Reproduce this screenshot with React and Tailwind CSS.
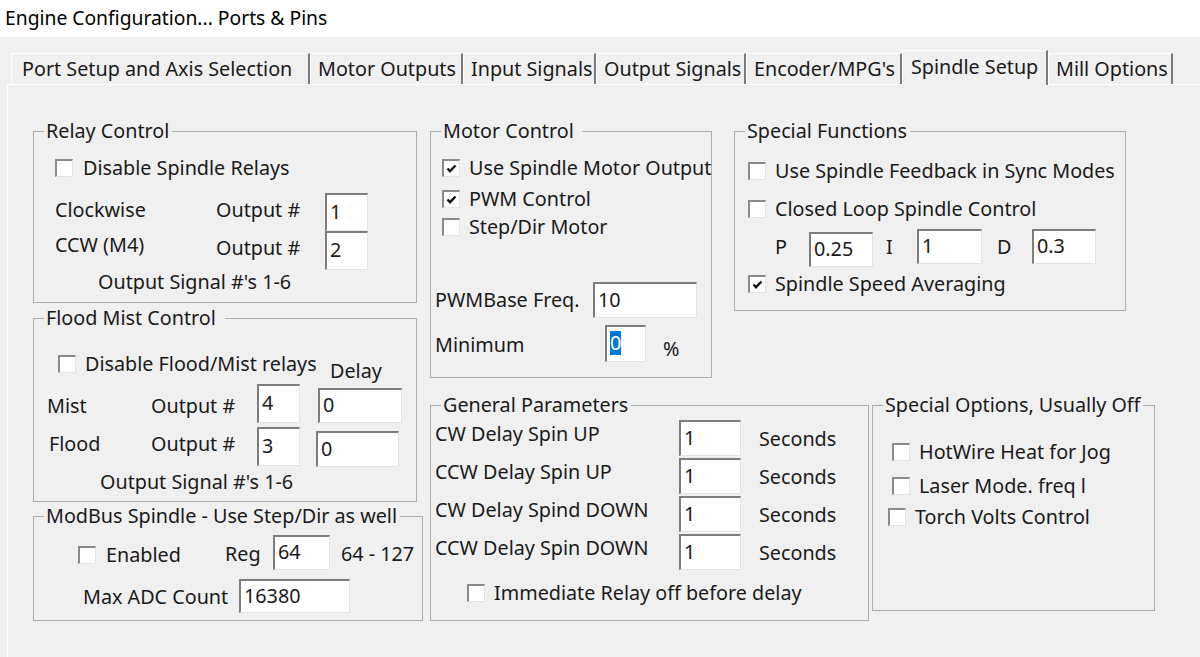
import React from 'react';

function Check({ checked }) {
  return (
    <span className="w-[18px] h-[18px] shrink-0 bg-white border-t-2 border-l-2 border-t-[#8a8a8a] border-l-[#8a8a8a] border-r border-b border-r-[#e3e3e3] border-b-[#e3e3e3] flex items-center justify-center">
      {checked && (
        <svg width="11" height="10" viewBox="0 0 11 10">
          <path d="M1.5 4.5 L4 7.2 L9.5 1.5" fill="none" stroke="#111" strokeWidth="2.4" />
        </svg>
      )}
    </span>
  );
}

function CheckRow({ label, checked, className }) {
  return (
    <div className={`flex items-center h-[24px] gap-[9px] whitespace-nowrap ${className}`}>
      <Check checked={checked} />
      <span>{label}</span>
    </div>
  );
}

function Field({ value, className, selected }) {
  return (
    <div className={`shrink-0 bg-white border-t-2 border-l-2 border-t-[#7d7d7d] border-l-[#7d7d7d] border-r border-b border-r-[#e3e3e3] border-b-[#e3e3e3] flex items-center pl-[3px] pb-[2px] ${className}`}>
      {selected ? <span className="bg-[#0078d7] text-white">{value}</span> : value}
    </div>
  );
}

function Group({ title, titleClass = 'pr-[3px]', className, children }) {
  return (
    <div className={`shrink-0 border border-[#adadad] ${className}`}>
      <div className={`-mt-[13px] ml-[10px] w-fit h-[24px] bg-[#f0f0f0] pl-[2px] whitespace-nowrap ${titleClass}`}>{title}</div>
      {children}
    </div>
  );
}

function Tab({ label, className, active }) {
  if (active) {
    return (
      <div className={`relative z-10 h-[35px] -mb-px bg-[#f0f0f0] border-t border-l border-white border-r-2 border-r-[#7a7a7a] pl-[8px] pt-[4px] whitespace-nowrap ${className}`}>
        {label}
      </div>
    );
  }
  return (
    <div className={`h-[31px] bg-[#f0f0f0] border-t border-l border-white border-r-2 border-r-[#7a7a7a] pl-[7px] pt-[3px] whitespace-nowrap ${className}`}>
      {label}
    </div>
  );
}

const delays = ['CW Delay Spin UP', 'CCW Delay Spin UP', 'CW Delay Spind DOWN', 'CCW Delay Spin DOWN'];

export default function App() {
  return (
    <div className="w-[1200px] h-[657px] overflow-hidden bg-[#f0f0f0] text-[#1a1a1a] font-['Noto_Sans',sans-serif] text-[19.75px] leading-[24px]">
      {/* Window title */}
      <div className="h-[37px] bg-white pl-[5px] pt-[6px] text-[19.3px] text-black">Engine Configuration... Ports &amp; Pins</div>

      {/* Tabs */}
      <div className="h-[47px] flex items-end pl-[11px]">
        <Tab label="Port Setup and Axis Selection" className="w-[299px] pl-[10px]" />
        <Tab label="Motor Outputs" className="w-[153px]" />
        <Tab label="Input Signals" className="w-[133px]" />
        <Tab label="Output Signals" className="w-[150px]" />
        <Tab label="Encoder/MPG's" className="w-[156px]" />
        <Tab label="Spindle Setup" className="w-[146px]" active />
        <Tab label="Mill Options" className="w-[125px] pl-[5px]" />
      </div>

      {/* Panel */}
      <div className="ml-[7px] h-[600px] border-t border-l border-white pt-[46px] pl-[25px] flex items-start gap-[7px]">
        {/* Left column */}
        <div className="w-[390px] flex flex-col">
          <Group title="Relay Control" className="w-[384px] h-[172px]">
            <CheckRow label="Disable Spindle Relays" className="mt-[13px] ml-[21px] gap-[10px]" />
            <div className="mt-[13px] pl-[21px] flex items-start h-[38px]">
              <span className="w-[161px] mt-[5px]">Clockwise</span>
              <span className="w-[109px] mt-[5px]">Output #</span>
              <Field value="1" className="w-[43px] h-[38px]" />
            </div>
            <div className="pl-[21px] flex items-start h-[39px]">
              <span className="w-[161px] mt-[2px]">CCW (M4)</span>
              <span className="w-[109px] mt-[5px]">Output #</span>
              <Field value="2" className="w-[43px] h-[39px]" />
            </div>
            <div className="pl-[64px] h-[24px]">Output Signal #'s 1-6</div>
          </Group>

          <Group title="Flood Mist Control" titleClass="pr-[9px]" className="w-[384px] h-[184px] mt-[15px]">
            <div className="mt-[22px] pl-[24px] flex items-start h-[24px]">
              <CheckRow label="Disable Flood/Mist relays" className="w-[272px]" />
              <span className="mt-[7px]">Delay</span>
            </div>
            <div className="mt-[8px] pl-[13px] flex items-start h-[39px]">
              <span className="w-[104px] mt-[10px]">Mist</span>
              <span className="w-[106px] mt-[10px]">Output #</span>
              <Field value="4" className="w-[43px] h-[39px]" />
              <Field value="0" className="ml-[18px] mt-[4px] w-[84px] h-[35px]" />
            </div>
            <div className="mt-[4px] pl-[15px] flex items-start h-[39px]">
              <span className="w-[102px] mt-[5px]">Flood</span>
              <span className="w-[106px] mt-[5px]">Output #</span>
              <Field value="3" className="w-[43px] h-[39px]" />
              <Field value="0" className="ml-[16px] mt-[4px] w-[83px] h-[36px]" />
            </div>
            <div className="mt-[4px] pl-[66px] h-[24px]">Output Signal #'s 1-6</div>
          </Group>

          <Group title="ModBus Spindle - Use Step/Dir as well" className="w-[390px] h-[105px] mt-[14px]">
            <div className="mt-[7px] pl-[44px] flex items-start h-[35px]">
              <CheckRow label="Enabled" className="w-[147px] mt-[8px] gap-[10px]" />
              <span className="w-[48px] mt-[7px]">Reg</span>
              <Field value="64" className="w-[57px] h-[35px]" />
              <span className="ml-[11px] mt-[7px] whitespace-nowrap">64 - 127</span>
            </div>
            <div className="mt-[9px] pl-[49px] flex items-start h-[34px]">
              <span className="w-[156px] mt-[6px]">Max ADC Count</span>
              <Field value="16380" className="w-[111px] h-[34px]" />
            </div>
          </Group>
        </div>

        {/* Right area */}
        <div className="flex flex-col">
          <div className="flex items-start gap-[22px]">
            <Group title="Motor Control" titleClass="pr-[8px]" className="w-[282px] h-[247px]">
              <CheckRow label="Use Spindle Motor Output" checked className="mt-[13px] ml-[11px]" />
              <CheckRow label="PWM Control" checked className="mt-[7px] ml-[11px]" />
              <CheckRow label="Step/Dir Motor" className="mt-[4px] ml-[11px]" />
              <div className="mt-[43px] pl-[4px] flex items-start h-[36px]">
                <span className="w-[158px] mt-[6px]">PWMBase Freq.</span>
                <Field value="10" className="w-[104px] h-[36px]" />
              </div>
              <div className="mt-[7px] pl-[4px] flex items-start h-[37px]">
                <span className="w-[170px] mt-[8px]">Minimum</span>
                <Field value="0" selected className="w-[41px] h-[37px]" />
                <span className="ml-[17px] mt-[12px]">%</span>
              </div>
            </Group>

            <Group title="Special Functions" className="w-[392px] h-[180px]">
              <CheckRow label="Use Spindle Feedback in Sync Modes" className="mt-[16px] ml-[13px]" />
              <CheckRow label="Closed Loop Spindle Control" className="mt-[14px] ml-[13px]" />
              <div className="mt-[8px] pl-[40px] flex items-start h-[38px]">
                <span className="w-[34px] mt-[6px]">P</span>
                <Field value="0.25" className="mt-[3px] w-[64px] h-[35px]" />
                <span className="ml-[13px] w-[31px] mt-[6px]">I</span>
                <Field value="1" className="w-[65px] h-[35px]" />
                <span className="ml-[15px] w-[35px] mt-[6px]">D</span>
                <Field value="0.3" className="w-[64px] h-[35px]" />
              </div>
              <CheckRow label="Spindle Speed Averaging" checked className="mt-[5px] ml-[13px]" />
            </Group>
          </div>

          <div className="mt-[27px] flex items-start gap-[3px]">
            <Group title="General Parameters" className="w-[439px] h-[216px]">
              <div className="mt-[3px] pl-[4px] flex flex-col">
                {delays.map((d) => (
                  <div key={d} className="flex items-start h-[38px]">
                    <span className="w-[244px] mt-[2px]">{d}</span>
                    <Field value="1" className="w-[62px] h-[36px]" />
                    <span className="ml-[18px] mt-[7px]">Seconds</span>
                  </div>
                ))}
              </div>
              <CheckRow label="Immediate Relay off before delay" className="mt-[9px] ml-[36px]" />
            </Group>

            <Group title="Special Options, Usually Off" className="w-[283px] h-[206px]">
              <CheckRow label="HotWire Heat for Jog" className="mt-[23px] ml-[19px]" />
              <CheckRow label="Laser Mode. freq l" className="mt-[10px] ml-[19px]" />
              <CheckRow label="Torch Volts Control" className="mt-[7px] ml-[15px]" />
            </Group>
          </div>
        </div>
      </div>
    </div>
  );
}
